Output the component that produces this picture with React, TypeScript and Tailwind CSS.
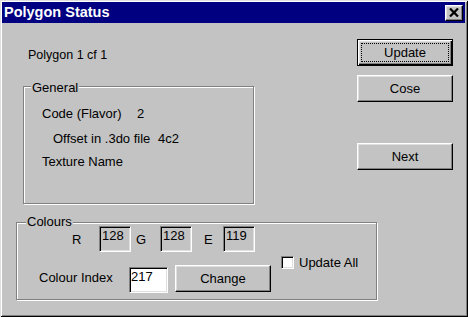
import React from "react";

const raised =
  "border border-t-white border-l-white border-r-black border-b-black shadow-[inset_-1px_-1px_0_#808080,inset_1px_1px_0_#dfdfdf]";
const sunken =
  "border border-t-[#808080] border-l-[#808080] border-r-white border-b-white shadow-[inset_1px_1px_0_#000,inset_-1px_-1px_0_#dfdfdf]";
const etched =
  "relative border border-[#808080] shadow-[inset_1px_1px_0_#fff,1px_1px_0_#fff]";

const Button = ({ label, isDefault = false }: { label: string; isDefault?: boolean }) =>
  isDefault ? (
    <div className="w-[96px] h-[27px] border border-black shadow-[inset_1px_1px_0_#fff,inset_-1px_-1px_0_#000,inset_-2px_-2px_0_#808080,inset_2px_2px_0_#dfdfdf] p-[3px]">
      <div className="w-full h-full border border-dotted border-black flex items-center justify-center leading-none">
        {label}
      </div>
    </div>
  ) : (
    <div className={`w-[96px] h-[27px] ${raised} flex items-center justify-center leading-none`}>
      {label}
    </div>
  );

const ValueBox = ({ value }: { value: string }) => (
  <div className={`w-[32px] h-[26px] ${sunken} pl-[2px] pt-[1px] leading-[15px]`}>{value}</div>
);

export default function App() {
  return (
    <div
      className="w-[468px] h-[317px] bg-[#c3c3c3] text-black text-[13px] overflow-hidden shadow-[inset_1px_1px_0_#dfdfdf,inset_-1px_-1px_0_#000,inset_2px_2px_0_#fff,inset_-2px_-2px_0_#808080]"
      style={{ fontFamily: '"Liberation Sans", Arial, sans-serif' }}
    >
      {/* title bar */}
      <div className="pt-[2px] pl-[2px] pr-[3px]">
        <div className="h-[21px] bg-[#000080] flex items-center justify-between pl-[2px] pr-[2px]">
          <span className="text-white font-bold text-[14.5px] leading-none">Polygon Status</span>
          <div className={`w-[18px] h-[16px] ${raised} bg-[#c3c3c3] flex items-center justify-center`}>
            <svg width="10" height="9" viewBox="0 0 10 9">
              <path d="M1 0.5 L9 8.5 M9 0.5 L1 8.5" stroke="#000" strokeWidth="2.2" />
            </svg>
          </div>
        </div>
      </div>

      {/* top section */}
      <div className="flex items-start">
        <div className="w-[357px] shrink-0">
          <div className="ml-[28px] mt-[25px] h-[15px] leading-[15px] text-[12.5px]">Polygon 1 cf 1</div>

          <div className={`${etched} ml-[23px] mt-[23px] w-[231px] h-[118px]`}>
            <span className="absolute left-[7px] -top-[7px] px-[1px] bg-[#c3c3c3] leading-[15px]">General</span>
            <div className="flex flex-col leading-[15px] pt-[19px]">
              <div className="flex">
                <span className="ml-[18px] w-[95px]">Code (Flavor)</span>
                <span>2</span>
              </div>
              <div className="flex mt-[10px]">
                <span className="ml-[29px] w-[105px]">Offset in .3do file</span>
                <span>4c2</span>
              </div>
              <div className="flex mt-[8px]">
                <span className="ml-[18px]">Texture Name</span>
              </div>
            </div>
          </div>
        </div>

        <div className="flex flex-col">
          <div className="mt-[16px]">
            <Button label="Update" isDefault />
          </div>
          <div className="mt-[9px]">
            <Button label="Cose" />
          </div>
          <div className="mt-[41px]">
            <Button label="Next" />
          </div>
        </div>
      </div>

      {/* colours */}
      <div className={`${etched} ml-[16px] mt-[18px] w-[361px] h-[78px]`}>
        <span className="absolute left-[9px] -top-[9px] px-[1px] bg-[#c3c3c3] leading-[15px]">Colours</span>
        <div className="flex items-start">
          <div className="flex flex-col">
            <div className="flex items-center mt-[3px] h-[26px]">
              <span className="ml-[55px] w-[27px] pt-[2px]">R</span>
              <ValueBox value="128" />
              <span className="ml-[5px] w-[24px] pt-[2px]">G</span>
              <ValueBox value="128" />
              <span className="ml-[12px] w-[19px] pt-[2px]">E</span>
              <ValueBox value="119" />
            </div>
            <div className="flex items-start mt-[13px]">
              <span className="ml-[22px] w-[90px] mt-[5px] leading-[15px]">Colour Index</span>
              <div className={`w-[39px] h-[26px] mt-[2px] bg-white ${sunken} pl-[1px] pt-[1px] leading-[15px]`}>217</div>
              <div className="ml-[7px]">
                <Button label="Change" />
              </div>
            </div>
          </div>
          <div className="flex items-center ml-[10px] mt-[32px]">
            <div className={`w-[13px] h-[13px] bg-white ${sunken}`} />
            <span className="ml-[5px] leading-[15px]">Update All</span>
          </div>
        </div>
      </div>
    </div>
  );
}
